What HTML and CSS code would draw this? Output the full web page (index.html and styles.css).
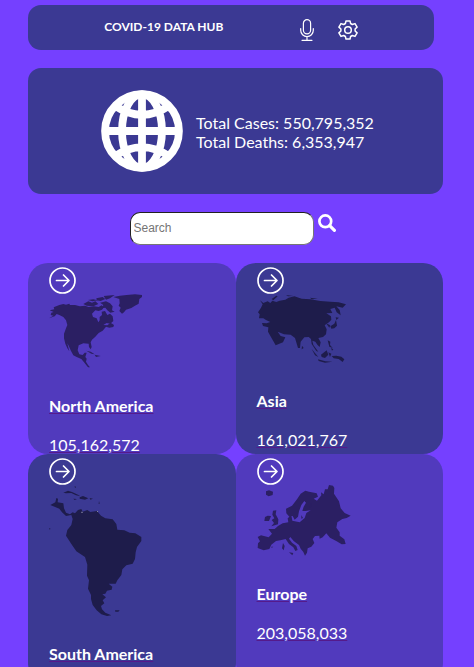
FILE: index.html
```html
<!DOCTYPE html>
<html lang="en">
<head>
<meta charset="utf-8">
<meta name="viewport" content="width=device-width, initial-scale=1">
<title>COVID-19 Data Hub</title>
<link rel="stylesheet" href="styles.css">
</head>
<body>
<svg class="defs" aria-hidden="true">
  <symbol id="arrow" viewBox="0 0 27 27">
    <g fill="none" stroke="#fff" stroke-width="1.7" stroke-linecap="round" stroke-linejoin="round">
      <circle cx="13.5" cy="13.5" r="12.5"/>
      <path d="M7.500 13.500H19.500M14.500 8l5.500 5.500-5.500 5.500"/>
    </g>
  </symbol>
</svg>
<header class="topbar">
  <h1 class="brand">COVID-19 DATA HUB</h1>
  <div class="tools">
    <button class="tool" type="button" aria-label="Voice">
      <svg width="14" height="22" viewBox="0 0 14 22" fill="none" stroke="#fff" stroke-width="1.2" stroke-linecap="round"><rect x="3.400" y=".7" width="7.200" height="14.200" rx="3.600"/><path d="M.7 9.500v1.800a6.300 6.300 0 0 0 12.600 0V9.500M7 17.700v3.500M2 21.300h10"/></svg>
    </button>
    <button class="tool" type="button" aria-label="Settings">
      <svg width="20" height="20" viewBox="0 0 20 20" fill="none" stroke="#fff" stroke-width="1.500" stroke-linejoin="round"><circle cx="10" cy="10" r="3.300"/><path d="M8 .9h4l.6 2.600 1.700 1L17 3.600l2.100 3.500-2 1.900v2l2 1.900-2.100 3.500-2.700-.9-1.700 1-.6 2.600H8l-.6-2.600-1.700-1-2.700.9-2.100-3.500 2-1.900V9l-2-1.900L3 3.600l2.700.9 1.700-1z"/></svg>
    </button>
  </div>
</header>
<main>
  <section class="summary">
    <svg class="globe" viewBox="244 91 242 242" fill="none" stroke="#fff" stroke-width="23" aria-hidden="true">
      <circle cx="365" cy="212" r="109"/>
      <ellipse cx="365" cy="212" rx="59" ry="109"/>
      <path d="M365 95V330M250 212H480M284 137Q365 192 446 137M284 287Q365 232 446 287"/>
    </svg>
    <div class="totals">
      <p>Total Cases: 550,795,352</p>
      <p>Total Deaths: 6,353,947</p>
    </div>
  </section>
  <form class="search">
    <input class="field" type="text" placeholder="Search" aria-label="Search">
    <button class="tool" type="button" aria-label="Find">
      <svg width="18" height="18" viewBox="0 0 18 18" fill="none" stroke="#fff"><circle cx="7.300" cy="7.300" r="5.900" stroke-width="2.700"/><path d="M11.700 11.700l4.700 4.700" stroke-width="3.200" stroke-linecap="round"/></svg>
    </button>
  </form>
  <section class="regions">
    <a class="card" href="#north-america">
      <svg class="go"><use href="#arrow"/></svg>
      <svg class="map" width="93" height="74" viewBox="87 117 279 222" aria-hidden="true">
        <path d="M366 120L345 118 320 120 300 122 280 126 298 132 299 145 296 152 302 158 298 168 306 176 312 172 318 164 334 159 345 152 356 146 358 132 366 126ZM87 190L100 182 92 180 94 173 101 171 89 166 103 163 101 157 118 150 130 147 138 149 148 146 150 150 165 150 180 154 195 152 206 156 222 154 236 156 245 151 252 157 246 164 236 168 226 166 216 176 219 186 230 190 235 202 239 196 239 186 246 180 245 170 255 168 262 180 270 176 278 184 280 198 271 206 260 204 250 210 262 211 272 203 282 210 280 216 268 218 258 215 248 227 236 234 226 245 216 254 212 262 215 276 212 283 207 276 206 266 190 265 176 271 173 286 178 298 188 300 194 293 200 293 196 306 200 311 198 320 204 330 210 337 204 337 192 322 184 312 170 306 160 301 153 288 145 270 142 265 148 289 142 280 136 266 132 250 132 236 138 220 142 210 138 196 130 186 118 180 110 177 104 184Z"/>
        <path d="M190 147L205 139 216 143 226 139 235 147 220 154 200 152ZM240 143L258 139 270 145 278 154 276 166 284 170 271 173 262 166 256 158 246 160 250 150ZM204 135L220 133 232 136 218 139ZM229 130L248 126 256 132 242 138 230 136ZM251 123L284 120 270 130 258 134ZM199 287L212 290 224 298 214 296ZM224 299L242 303 228 306Z"/>
      </svg>
      <h2 class="name">North America</h2>
      <p class="count">105,162,572</p>
    </a>
    <a class="card dark" href="#asia">
      <svg class="go"><use href="#arrow"/></svg>
      <svg class="map" width="91" height="69" viewBox="80 117 273 207" aria-hidden="true">
        <path d="M89 136L99 144 112 139 120 144 126 137 138 141 148 137 165 134 175 128 192 124 214 131 240 133 270 138 300 140 325 142 347 148 337 158 318 154 328 165 331 181 319 172 313 158 300 162 306 174 288 175 302 184 303 194 296 202 289 206 283 211 289 223 287 238 278 246 264 249 271 262 268 276 261 269 255 260 246 257 249 270 264 290 258 288 244 267 242 252 235 246 222 247 211 260 209 279 203 279 194 249 181 239 161 238 142 230 151 243 165 247 158 262 136 271 124 250 113 230 114 217 98 213 95 204 109 205 120 201 107 195 99 190 86 190 88 178 83 172 92 158 97 148Z"/>
        <path d="M287 205L300 211 297 218ZM300 214L312 206 317 195 320 212 312 220 303 221ZM316 187L326 188 318 195ZM244 282L254 294 264 306 254 301ZM272 299L289 286 294 299 284 309 274 306ZM263 313L285 319 306 320 284 323 265 318ZM292 256L300 260 299 270 307 279 297 275ZM294 292L303 296 299 306ZM304 303L318 302 333 305 342 313 337 321 325 312 310 310ZM283 225L287 229 285 236ZM124 132L138 122 142 124 129 136ZM167 120L189 123 173 124ZM239 128L262 131 244 133ZM302 279L309 283 305 287ZM215 272L220 279 214 283Z"/>
      </svg>
      <h2 class="name">Asia</h2>
      <p class="count">161,021,767</p>
    </a>
    <a class="card dark" href="#south-america">
      <svg class="go"><use href="#arrow"/></svg>
      <svg class="map" width="93" height="131" viewBox="27 108 279 393" aria-hidden="true">
        <path d="M31 168L46 160 49 147 54 149 53 160 70 163 72 178 78 191 90 196 98 190 105 193 114 183 124 180 128 188 142 183 151 189 171 186 183 200 196 208 218 211 229 225 232 242 253 244 269 251 286 253 304 264 304 276 291 294 287 310 285 330 278 344 259 349 247 361 244 378 232 394 227 404 206 404 217 413 215 422 201 425 196 434 187 436 198 445 188 454 193 463 183 471 186 481 196 491 214 499 201 501 184 496 170 484 158 468 153 450 153 438 144 419 147 394 141 380 142 347 135 324 109 307 94 285 78 260 82 243 94 228 98 210 94 198 78 201 66 190 58 179Z"/>
        <path d="M70 131L84 125 96 129 114 137 121 142 108 139 94 132 78 133ZM119 145L129 141 145 148 135 152 119 149ZM100 149L111 150 104 153ZM149 147L159 149 151 152ZM225 484L239 484 235 488 226 488ZM104 110L108 114 105 118ZM177 156L179 164 176 165ZM27 238L31 238 30 243Z"/>
        <path d="M124 188h4v4h-4zM171 186h3v3h-3z" fill="#81819f"/>
      </svg>
      <h2 class="name">South America</h2>
    </a>
    <a class="card" href="#europe">
      <svg class="go"><use href="#arrow"/></svg>
      <svg class="map" width="94" height="71" viewBox="48 108 282 213" aria-hidden="true">
        <path d="M136 193L135 179 153 170 168 151 179 134 193 125 204 128 227 133 231 143 218 149 228 155 241 139 240 130 248 136 252 121 260 121 264 108 276 110 280 117 279 134 294 157 299 178 311 192 329 200 317 207 304 210 289 220 286 236 296 250 296 260 310 271 314 285 302 286 287 277 267 266 256 253 245 265 236 269 235 260 222 261 215 270 220 282 211 293 200 298 198 311 192 320 187 309 179 299 174 288 158 276 148 264 144 269 153 281 166 291 170 303 163 306 157 295 144 285 134 270 118 274 105 276 91 287 85 300 68 304 50 297 51 283 57 277 50 264 60 259 83 265 93 254 82 240 101 240 111 231 125 223 142 220 140 208 151 199 154 215 176 220 191 207 196 192 209 184 194 186 184 186 188 173 195 161 190 156 181 168 174 187 171 203 161 212 155 201 145 203Z"/>
        <path d="M75 127L84 124 96 128 95 138 83 142 75 137ZM96 185L106 184 104 196 112 211 111 226 91 232 99 222 92 213 100 208 94 197ZM80 200L90 201 84 216 70 216 72 204ZM144 310L157 312 154 319ZM126 282L131 291 128 304 123 298ZM209 161L213 171 206 176ZM181 198L186 207 181 209ZM91 293L97 293 92 297Z"/>
      </svg>
      <h2 class="name">Europe</h2>
      <p class="count">203,058,033</p>
    </a>
  </section>
</main>
</body>
</html>
```
FILE: styles.css
```css
* {
  box-sizing: border-box;
}

body {
  margin: 0;
  height: 100vh;
  overflow: hidden;
  padding: 5px 31px 0 28px;
  background: #7540ff;
  color: #fff;
  font: 16px/19px Lato, sans-serif;
}

h1,
h2,
p {
  margin: 0;
}

.defs {
  position: absolute;
  width: 0;
  height: 0;
}

.topbar {
  display: flex;
  align-items: center;
  justify-content: space-evenly;
  height: 45px;
  margin-right: 9px;
  border-radius: 13px;
  background: #3b3993;
}

.brand {
  padding-bottom: 2px;
  font-size: 12px;
  line-height: 16px;
}

.tools {
  display: flex;
  align-items: center;
  gap: 24px;
  padding-top: 5px;
}

.tool {
  display: block;
  padding: 0;
  border: 0;
  background: none;
}

.tool svg {
  display: block;
}

.summary {
  display: flex;
  align-items: center;
  justify-content: center;
  gap: 13px;
  margin-top: 18px;
  padding: 22px 0 22px 4px;
  border-radius: 13px;
  background: #3b3993;
}

.globe {
  width: 82px;
  height: 82px;
}

.totals {
  padding-top: 2px;
}

.search {
  display: flex;
  align-items: flex-start;
  justify-content: center;
  gap: 4px;
  margin: 18px 6px 18px 0;
}

.search .tool {
  padding-top: 2px;
}

.field {
  width: 184px;
  height: 33px;
  padding: 0 3px 2px;
  border: 1px inset #767676;
  border-radius: 10px;
  background: #fff;
  font: 12px "Liberation Sans", sans-serif;
}

.field::placeholder {
  color: #757575;
}

.regions {
  display: grid;
  grid-template-columns: 1fr 1fr;
}

.card {
  padding: 4px 0 0 21px;
  border-radius: 20px;
  background: #513abd;
  color: #fff;
  text-decoration: underline;
  text-decoration-color: #551a8b;
}

.card.dark {
  background: #3b3993;
}

.go,
.map {
  display: block;
}

.go {
  width: 27px;
  height: 27px;
}

.map {
  fill: #2b1f63;
}

.dark .map {
  fill: #1e1c4b;
}

.name {
  margin: 28px 0 20px;
  font-size: 16px;
  line-height: 19px;
}
```
